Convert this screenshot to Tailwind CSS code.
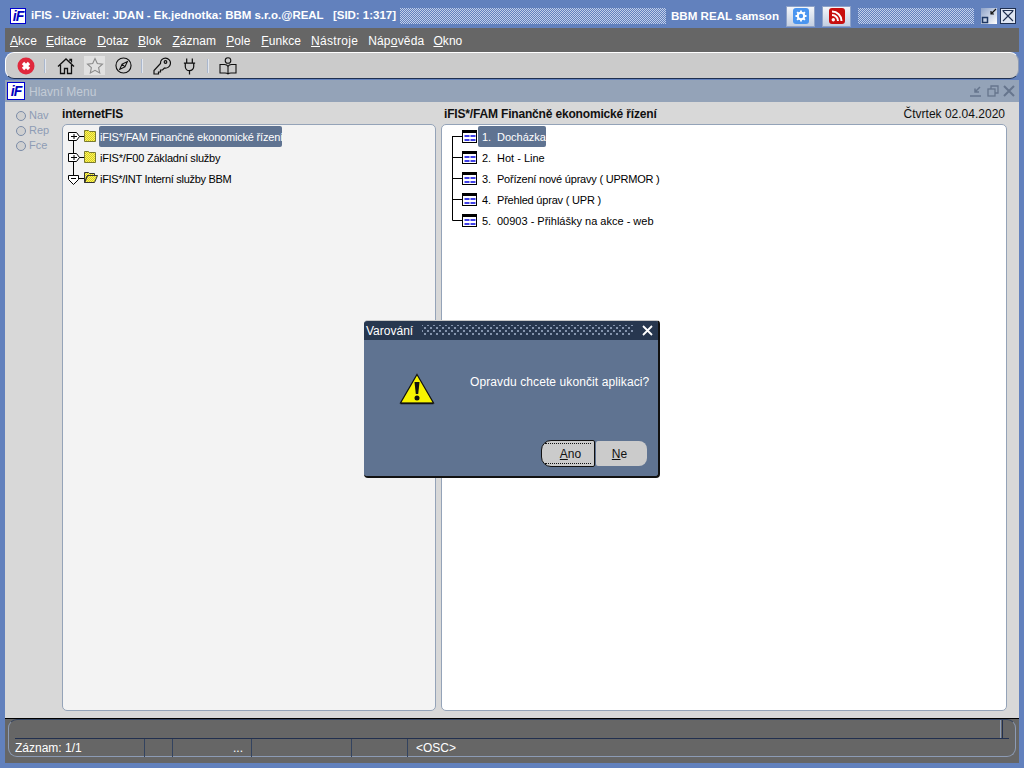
<!DOCTYPE html>
<html lang="cs">
<head>
<meta charset="UTF-8">
<title>iFIS</title>
<script src="https://cdn.jsdelivr.net/npm/@tailwindcss/browser@4"></script>
</head>
<body class="relative w-[1024px] h-[768px] overflow-hidden bg-[#6281bd] font-['Liberation_Sans',sans-serif] text-[12px]">

<!-- titulek aplikace -->
<div class="flex items-center h-[28px] pt-[4px] pl-[10px] text-white font-bold">
  <div class="flex items-center justify-center w-[16px] h-[16px] border border-[#0000d0] bg-white text-[#0000c0] text-[14px] italic font-bold leading-none tracking-[-1px] mr-[5px]">iF</div>
  <span class="w-[369px] whitespace-nowrap text-[11.5px] tracking-[-0.02px]">iFIS - Uživatel: JDAN - Ek.jednotka: BBM s.r.o.@REAL &nbsp; [SID: 1:317]</span>
  <svg width="266" height="16"><defs><pattern id="tecky" width="2" height="2" patternUnits="userSpaceOnUse"><rect width="1" height="1" fill="#c3d0ea"/><rect x="1" y="1" width="1" height="1" fill="#c3d0ea"/></pattern></defs><rect width="266" height="16" fill="url(#tecky)"/></svg>
  <span class="ml-[5px] w-[115px] whitespace-nowrap text-[11.6px]">BBM REAL samson</span>
  <div class="flex items-center justify-center w-[29px] h-[21px] bg-gradient-to-b from-[#f4f6fa] to-[#c4cfe2] border border-[#8ea2c8]">
    <svg width="16" height="16" viewBox="0 0 16 16"><rect width="16" height="16" rx="3" fill="#4a95f0"/><circle cx="8" cy="8" r="3.2" fill="none" stroke="#fff" stroke-width="2"/><path d="M8 2.500v2M8 11.500v2M2.500 8h2M11.500 8h2M4.100 4.100l1.400 1.400M10.500 10.500l1.400 1.400M4.100 11.900l1.400-1.400M10.500 5.500l1.400-1.400" stroke="#fff" stroke-width="1.800"/></svg>
  </div>
  <div class="flex items-center justify-center w-[29px] h-[21px] ml-[7px] bg-gradient-to-b from-[#f4f6fa] to-[#c4cfe2] border border-[#8ea2c8]">
    <svg width="16" height="16" viewBox="0 0 16 16"><rect width="16" height="16" rx="3" fill="#c80e0e"/><circle cx="4.300" cy="11.700" r="1.700" fill="#fff"/><path d="M3 7a6 6 0 0 1 6 6M3 3.500a9.500 9.500 0 0 1 9.500 9.500" fill="none" stroke="#fff" stroke-width="2"/></svg>
  </div>
  <svg class="ml-[7px]" width="116" height="16"><rect width="116" height="16" fill="url(#tecky)"/></svg>
  <div class="ml-[7px] w-[16px] h-[16px] bg-gradient-to-br from-[#8ea2c8] to-white">
    <svg width="16" height="16" viewBox="0 0 16 16"><rect x="1.500" y="9.500" width="5" height="5" fill="none" stroke="#1f3864" stroke-width="1.500"/><path d="M15 1l-5 5M10 3v3h3" fill="none" stroke="#111" stroke-width="1.200"/></svg>
  </div>
  <div class="ml-[3px] w-[16px] h-[16px] bg-[#dfe6f3] border border-[#1f2f4f]">
    <svg width="14" height="14" viewBox="0 0 14 14"><path d="M2 2l10 10M12 2L2 12M1.500 1.500h11" stroke="#1f2f4f" stroke-width="1.100" fill="none"/></svg>
  </div>
</div>

<div class="mx-[5px] w-[1014px]">
  <!-- menu -->
  <div class="flex items-center h-[24px] pt-[2px] pl-[5px] bg-[#666666] text-white text-[12px] tracking-[0.05px]">
    <span><u>A</u>kce</span><span class="ml-[9px]"><u>E</u>ditace</span><span class="ml-[11px]"><u>D</u>otaz</span><span class="ml-[9px]"><u>B</u>lok</span><span class="ml-[11px]"><u>Z</u>áznam</span><span class="ml-[10px]"><u>P</u>ole</span><span class="ml-[11px]"><u>F</u>unkce</span><span class="ml-[10px] tracking-[0.3px]"><u>N</u>ástroje</span><span class="ml-[10px] tracking-[0.2px]">Náp<u>o</u>věda</span><span class="ml-[9px]"><u>O</u>kno</span>
  </div>

  <!-- toolbar -->
  <div class="flex items-center h-[27px] pl-[11px] rounded-[9px] bg-[#cbcbcb] border-t border-t-white border-l border-l-white border-b border-b-[#1f3050] border-r border-r-[#8c9bb5]">
    <svg width="18" height="18" viewBox="0 0 18 18"><circle cx="9" cy="9" r="8.500" fill="#e0283c"/><path d="M6 6l6 6M12 6l-6 6" stroke="#fff" stroke-width="3.200"/></svg>
    <div class="ml-[9px] w-[2px] h-[14px] bg-gradient-to-r from-[#8fa0bd] to-white"></div>
    <svg class="ml-[11px]" width="18" height="18" viewBox="0 0 18 18" fill="none" stroke="#111" stroke-width="1.300"><path d="M1 9.500L9 2l8 7.500M3.500 8v8.500h4v-5h3v5h4V8M13 4V2.500h1.500v3"/></svg>
    <div class="ml-[9px] flex items-center justify-center w-[21px] h-[19px] bg-[#e1e1e1]">
      <svg width="18" height="18" viewBox="0 0 18 18"><path d="M9 1.500l2.300 5 5.200.6-3.900 3.500 1.100 5.400L9 13.300 4.300 16l1.100-5.400L1.500 7.100l5.200-.6z" fill="none" stroke="#8a8a8a" stroke-width="1.100"/></svg>
    </div>
    <svg class="ml-[10px]" width="17" height="17" viewBox="0 0 18 18" fill="none" stroke="#111" stroke-width="1.200"><circle cx="9" cy="9" r="8"/><path d="M13 5l-2.500 5.500L5 13l2.500-5.500z M7.500 7.500l3 3"/></svg>
    <div class="ml-[9px] w-[2px] h-[14px] bg-gradient-to-r from-[#8fa0bd] to-white"></div>
    <svg class="ml-[10px]" width="18" height="18" viewBox="0 0 18 18" fill="none" stroke="#111" stroke-width="1.200"><path d="M7.500 6.500a5 5 0 1 1 4 4.500L9.500 13H7.500v2H5.500v2H1v-3.500z"/><circle cx="12.500" cy="5" r="1.300"/></svg>
    <svg class="ml-[11px]" width="15" height="18" viewBox="0 0 16 18" fill="none" stroke="#111" stroke-width="1.300"><path d="M5 1v5M11 1v5M2 6h12M3.500 6v3.500a4.500 4.500 0 0 0 9 0V6M8 14v4"/></svg>
    <div class="ml-[10px] w-[2px] h-[14px] bg-gradient-to-r from-[#8fa0bd] to-white"></div>
    <svg class="ml-[10px]" width="18" height="18" viewBox="0 0 18 18" fill="none" stroke="#111" stroke-width="1.100"><circle cx="9" cy="3.500" r="2.800"/><path d="M1 7.500h4.500c1.800 0 3 .8 3.500 2 .5-1.200 1.700-2 3.500-2H17V16h-5c-1.500 0-2.500.4-3 1-.5-.6-1.500-1-3-1H1zM9 9.500V17"/></svg>
  </div>

  <!-- okno Hlavní Menu -->
  <div class="mt-[1px] h-[638px] flex flex-col bg-[#d8d8d8]">
    <div class="flex items-center shrink-0 h-[22px] pl-[2px] pr-[4px] bg-[#94a3b8] text-[#c3cbd6] text-[12px]">
      <div class="flex items-center justify-center w-[18px] h-[18px] border border-[#0000d0] bg-white text-[#0000c0] text-[14px] italic font-bold leading-none tracking-[-1px] mr-[4px]">iF</div>
      <span class="flex-1 pt-[2px]">Hlavní Menu</span>
      <svg width="12" height="12" viewBox="0 0 12 12" fill="none" stroke="#66758d" stroke-width="1.500"><path d="M0 11h11M10 2L5 7M5 3.500V7h4"/></svg>
      <svg class="ml-[5px]" width="12" height="12" viewBox="0 0 12 12" fill="none" stroke="#66758d" stroke-width="1.300"><rect x="1" y="4" width="7" height="7"/><path d="M4 4V1h7v7H8"/></svg>
      <svg class="ml-[4px]" width="12" height="12" viewBox="0 0 12 12" fill="none" stroke="#66758d" stroke-width="2"><path d="M1 1l10 10M11 1L1 11"/></svg>
    </div>
    <div class="flex flex-1 min-h-0 pl-[11px] pr-[12px] pb-[7px]">
      <!-- Nav / Rep / Fce -->
      <div class="w-[46px] pt-[8px] text-[11px] text-[#8e9cb5] flex flex-col gap-[4px]">
        <div class="flex items-center h-[11px]"><span class="w-[10px] h-[10px] rounded-full border border-[#7b8ca8] bg-[#d0d0d0]"></span>&nbsp;Nav</div>
        <div class="flex items-center h-[11px]"><span class="w-[10px] h-[10px] rounded-full border border-[#7b8ca8] bg-[#d0d0d0]"></span>&nbsp;Rep</div>
        <div class="flex items-center h-[11px]"><span class="w-[10px] h-[10px] rounded-full border border-[#7b8ca8] bg-[#d0d0d0]"></span>&nbsp;Fce</div>
      </div>
      <!-- levý strom -->
      <div class="flex flex-col w-[374px]">
        <div class="h-[22px] pt-[1px] flex items-center font-bold text-[#111] tracking-[-0.15px]">internetFIS</div>
        <div class="relative flex-1 rounded-[5px] border border-[#94a3b8] bg-[#f3f3f3] pt-[1px] text-[11px] text-black">
          <svg class="absolute left-[4px] top-[4px]" width="36" height="64" viewBox="0 0 36 64">
            <defs><pattern id="dit" width="2" height="2" patternUnits="userSpaceOnUse"><rect width="2" height="2" fill="#fbf560"/><rect width="1" height="1" fill="#d8cc20"/><rect x="1" y="1" width="1" height="1" fill="#d8cc20"/></pattern></defs>
            <path d="M6.500 7v42" stroke="#000" fill="none"/>
            <path d="M12 7.500h5M12 28.500h5M12 49.500h5" stroke="#000"/>
            <path d="M1.500 3.500h8l3 4-3 4h-8zM1.500 24.500h8l3 4-3 4h-8z" fill="#fff" stroke="#000"/>
            <path d="M4 7.500h6M7 5v5M4 28.500h6M7 26v5" stroke="#000"/>
            <path d="M1.500 46.500h10v4l-5 5-5-5z" fill="#fff" stroke="#000"/>
            <path d="M4 49.500h5" stroke="#000"/>
            <path d="M17.500 4.500v-3h4l1 1h6v10h-11z" fill="url(#dit)" stroke="#7a7a30"/>
            <path d="M17.500 25.500v-3h4l1 1h6v10h-11z" fill="url(#dit)" stroke="#7a7a30"/>
            <path d="M17.500 53.500v-10h4l1 1h5v2h-7l-3 7zM17.500 53.500l3-7h10l-3 7z" fill="url(#dit)" stroke="#333"/>
          </svg>
          <div class="flex items-center h-[21px] pl-[36px]"><span class="flex items-center h-[21px] w-[183px] pl-[1px] pt-[2px] rounded-[2px] bg-[#5f7391] text-white whitespace-nowrap tracking-[-0.2px]">iFIS*/FAM Finančně ekonomické řízení</span></div>
          <div class="flex items-center h-[21px] pt-[2px] pl-[37px] whitespace-nowrap tracking-[-0.2px]">iFIS*/F00 Základní služby</div>
          <div class="flex items-center h-[21px] pt-[2px] pl-[37px] whitespace-nowrap tracking-[-0.3px]">iFIS*/INT Interní služby BBM</div>
        </div>
      </div>
      <!-- pravý strom -->
      <div class="flex flex-col flex-1 ml-[5px]">
        <div class="h-[22px] pt-[1px] flex items-center justify-between pl-[3px] pr-[2px] text-[#111]">
          <span class="font-bold tracking-[-0.17px]">iFIS*/FAM Finančně ekonomické řízení</span>
          <span>Čtvrtek 02.04.2020</span>
        </div>
        <div class="relative flex-1 rounded-[5px] border border-[#94a3b8] bg-white pt-[1px] text-[11px] text-black">
          <svg class="absolute left-[9px] top-[5px]" width="26" height="98" viewBox="0 0 26 98">
            <path d="M1.500 6v84.500H12M1.500 6.500H12M1.500 27.500H12M1.500 48.500H12M1.500 69.500H12" fill="none" stroke="#000"/>
            <g fill="#fff" stroke="#000">
              <rect x="11.500" y=".5" width="14" height="12"/><rect x="11.500" y="21.500" width="14" height="12"/><rect x="11.500" y="42.500" width="14" height="12"/><rect x="11.500" y="63.500" width="14" height="12"/><rect x="11.500" y="84.500" width="14" height="12"/>
            </g>
            <path d="M12 2h13M12 23h13M12 44h13M12 65h13M12 86h13" stroke="#000" stroke-width="2"/>
            <path d="M13.500 6h5M19.500 6h5M13.500 10h5M19.500 10h5M13.500 27h5M19.500 27h5M13.500 31h5M19.500 31h5M13.500 48h5M19.500 48h5M13.500 52h5M19.500 52h5M13.500 69h5M19.500 69h5M13.500 73h5M19.500 73h5M13.500 90h5M19.500 90h5M13.500 94h5M19.500 94h5" stroke="#0000e0" stroke-width="1.500"/>
          </svg>
          <div class="flex items-center h-[21px] pl-[36px]"><span class="flex items-center h-[21px] w-[68px] pl-[4px] pt-[2px] rounded-[2px] bg-[#5f7391] text-white"><span class="w-[15px]">1.</span>Docházka</span></div>
          <div class="flex items-center h-[21px] pt-[2px] pl-[40px]"><span class="w-[15px]">2.</span>Hot - Line</div>
          <div class="flex items-center h-[21px] pt-[2px] pl-[40px]"><span class="w-[15px]">3.</span><span class="tracking-[-0.22px]">Pořízení nové úpravy ( UPRMOR )</span></div>
          <div class="flex items-center h-[21px] pt-[2px] pl-[40px]"><span class="w-[15px]">4.</span><span class="tracking-[-0.2px]">Přehled úprav ( UPR )</span></div>
          <div class="flex items-center h-[21px] pt-[2px] pl-[40px]"><span class="w-[15px]">5.</span>00903 - Přihlášky na akce - web</div>
        </div>
      </div>
    </div>
  </div>

  <!-- stavový řádek -->
  <div class="h-[45px] bg-[#666666] border-t border-t-black pl-[3px] pr-[3px]">
    <div class="h-[38px] rounded-[9px] border border-[#8c9bb5] border-t-[#33435f] flex flex-col pl-[6px] pr-[6px]">
      <div class="h-[18px] flex justify-end pr-[6px]"><div class="w-[3px] h-[18px] border-l border-l-[#8c9bb5] border-r border-r-[#22304f]"></div></div>
      <div class="flex-1 border-t border-t-[#22304f] flex text-white text-[12px] leading-[18px]">
        <div class="w-[130px] border-r border-r-[#33435f]">Záznam: 1/1</div>
        <div class="w-[28px] border-r border-r-[#33435f]"></div>
        <div class="w-[79px] border-r border-r-[#33435f] text-right pr-[8px]">...</div>
        <div class="w-[100px] border-r border-r-[#33435f]"></div>
        <div class="w-[56px] border-r border-r-[#33435f]"></div>
        <div class="pl-[8px]">&lt;OSC&gt;</div>
      </div>
    </div>
  </div>
</div>

<!-- dialog Varování -->
<div class="absolute left-[364px] top-[320px] w-[296px] h-[158px] rounded-[4px] bg-[#5f7391] border-b-2 border-r-2 border-b-[#111] border-r-[#111] border-t border-t-[#c8c8c8] overflow-hidden flex flex-col text-[12px]">
  <div class="flex items-center h-[19px] pl-[2px] pr-[4px] bg-[#27374f] text-white">
    <span class="w-[56px]">Varování</span>
    <div class="w-[211px] h-[11px] bg-[radial-gradient(#8494ad_0.8px,transparent_1.1px),radial-gradient(#8494ad_0.8px,transparent_1.1px)] bg-[length:6px_6px] bg-[position:0_0,3px_3px]"></div>
    <svg class="ml-[9px]" width="11" height="11" viewBox="0 0 11 11" fill="none" stroke="#fff" stroke-width="1.800"><path d="M1 1l9 9M10 1l-9 9"/></svg>
  </div>
  <div class="flex flex-1 relative">
    <svg class="absolute left-[35px] top-[33px]" width="36" height="32" viewBox="0 0 36 32"><path d="M18 1.500L34.500 30h-33z" fill="#f8f400" stroke="#111" stroke-width="1.200"/><path d="M1.500 30.500h33" stroke="#111" stroke-width="1.500"/><path d="M15.500 9h5l-1.300 12h-2.400z" fill="#111"/><circle cx="18" cy="25" r="2.500" fill="#111"/></svg>
    <p class="absolute left-[106px] top-[33px] text-white whitespace-nowrap tracking-[0.1px]">Opravdu chcete ukončit aplikaci?</p>
    <div class="absolute left-[177px] top-[100px] flex">
      <button class="flex items-center w-[54px] h-[27px] pl-[3px] rounded-l-[10px] rounded-r-[2px] border border-[#111] bg-[#cbcbcb] text-[#111]">
        <span class="flex items-center justify-center w-[46px] h-[21px] pl-[5px] border-y border-dotted border-[#111]"><span><u>A</u>no</span></span>
      </button>
      <button class="ml-[1px] mt-[1px] w-[51px] h-[25px] pr-[4px] rounded-r-[8px] rounded-l-[2px] bg-[#cbcbcb] text-[#111]"><u>N</u>e</button>
    </div>
  </div>
</div>

</body>
</html>
